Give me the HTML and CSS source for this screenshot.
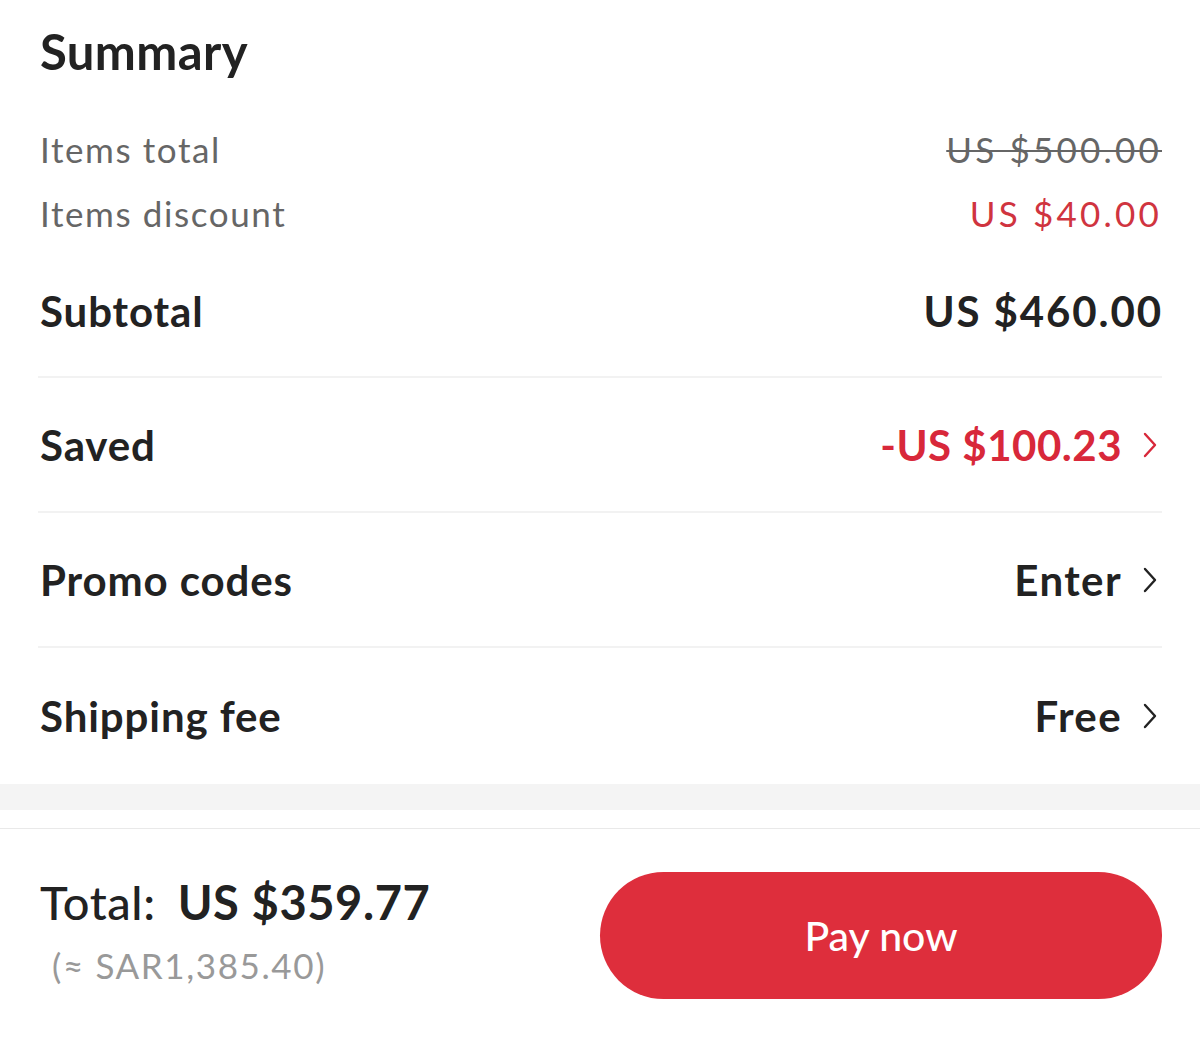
FILE: index.html
```html
<!DOCTYPE html>
<html lang="en">
<head>
<meta charset="utf-8">
<title>Summary</title>
<link rel="stylesheet" href="styles.css">
</head>
<body>
<main class="summary">
  <h2 class="title">Summary</h2>
  <div class="minor-row">
    <span class="label">Items total</span>
    <span class="value strike">US $500.00</span>
  </div>
  <div class="minor-row">
    <span class="label">Items discount</span>
    <span class="value red-light">US $40.00</span>
  </div>
  <div class="major-row first">
    <span class="label">Subtotal</span>
    <span class="value">US $460.00</span>
  </div>
  <div class="major-row">
    <span class="label">Saved</span>
    <span class="value red">-US $100.23
      <svg class="chev" viewBox="0 0 16 28" width="16" height="28"><path d="M3 3 L13 14 L3 25" fill="none" stroke="currentColor" stroke-width="2.4" stroke-linecap="round" stroke-linejoin="round"/></svg>
    </span>
  </div>
  <div class="major-row">
    <span class="label">Promo codes</span>
    <span class="value">Enter
      <svg class="chev" viewBox="0 0 16 28" width="16" height="28"><path d="M3 3 L13 14 L3 25" fill="none" stroke="currentColor" stroke-width="2.4" stroke-linecap="round" stroke-linejoin="round"/></svg>
    </span>
  </div>
  <div class="major-row last">
    <span class="label">Shipping fee</span>
    <span class="value">Free
      <svg class="chev" viewBox="0 0 16 28" width="16" height="28"><path d="M3 3 L13 14 L3 25" fill="none" stroke="currentColor" stroke-width="2.4" stroke-linecap="round" stroke-linejoin="round"/></svg>
    </span>
  </div>
</main>
<div class="band"></div>
<footer class="checkout">
  <div class="totals">
    <div class="total-line"><span class="total-label">Total:</span><span class="total-amount">US $359.77</span></div>
    <div class="converted">(≈ SAR1,385.40)</div>
  </div>
  <button class="pay">Pay now</button>
</footer>
</body>
</html>
```

FILE: styles.css
```css
* { box-sizing: border-box; }
html, body { margin: 0; padding: 0; background: #fff; }
body {
  font-family: Lato, "Noto Sans", "Liberation Sans", sans-serif;
  color: #222;
  width: 1200px;
}
.summary { padding: 0 38px; }
.title {
  margin: 0;
  height: 117px;
  line-height: 102px;
  font-size: 49px;
  font-weight: 700;
  letter-spacing: 0.4px;
  color: #222;
  padding-left: 2px;
}
.minor-row {
  display: flex;
  justify-content: space-between;
  align-items: center;
  height: 64px;
  font-size: 35px;
  letter-spacing: 1.6px;
  color: #666;
  padding: 0 0 0 2px;
}
.minor-row .value { letter-spacing: 3.2px; margin-right: 0; }
.strike { text-decoration: line-through; text-decoration-thickness: 2px; }
.red-light { color: #d0343f; }
.major-row {
  display: flex;
  justify-content: space-between;
  align-items: center;
  height: 135px;
  border-bottom: 2px solid #f2f2f2;
  font-size: 42px;
  font-weight: 700;
  letter-spacing: 0.9px;
  color: #222;
  padding: 0 0 0 2px;
}
.major-row .value { letter-spacing: 1.4px; }
.major-row.first { height: 133px; }
.major-row.first .value { letter-spacing: 1.9px; margin-right: -1px; }
.major-row.last { border-bottom: none; height: 136px; }
.value { display: flex; align-items: center; }
.major-row .value.red { letter-spacing: 0.5px; color: #d8283a; }
.chev { margin-left: 20px; margin-right: 4px; color: #222; }
.red .chev { color: #d8283a; }
.band { height: 26px; background: #f4f4f4; }
.checkout {
  margin-top: 18px;
  border-top: 1px solid #e9e9e9;
  height: 210px;
  display: flex;
  align-items: center;
  justify-content: space-between;
  padding: 0 38px 0 40px;
}
.totals { display: flex; flex-direction: column; gap: 14px; margin-top: -8px; }
.total-line { display: flex; align-items: baseline; font-size: 47px; letter-spacing: 0.6px; color: #222; }
.total-label { font-weight: 500; margin-right: 22px; }
.total-amount { font-weight: 700; }
.converted { font-size: 35px; letter-spacing: 1.6px; color: #999; padding-left: 12px; }
.pay {
  width: 562px;
  height: 127px;
  border: none;
  border-radius: 64px;
  background: #de2e3c;
  color: #fff;
  font-family: Lato, "Noto Sans", sans-serif;
  font-size: 41px;
  font-weight: 500;
  margin-top: 4px;
}
```
